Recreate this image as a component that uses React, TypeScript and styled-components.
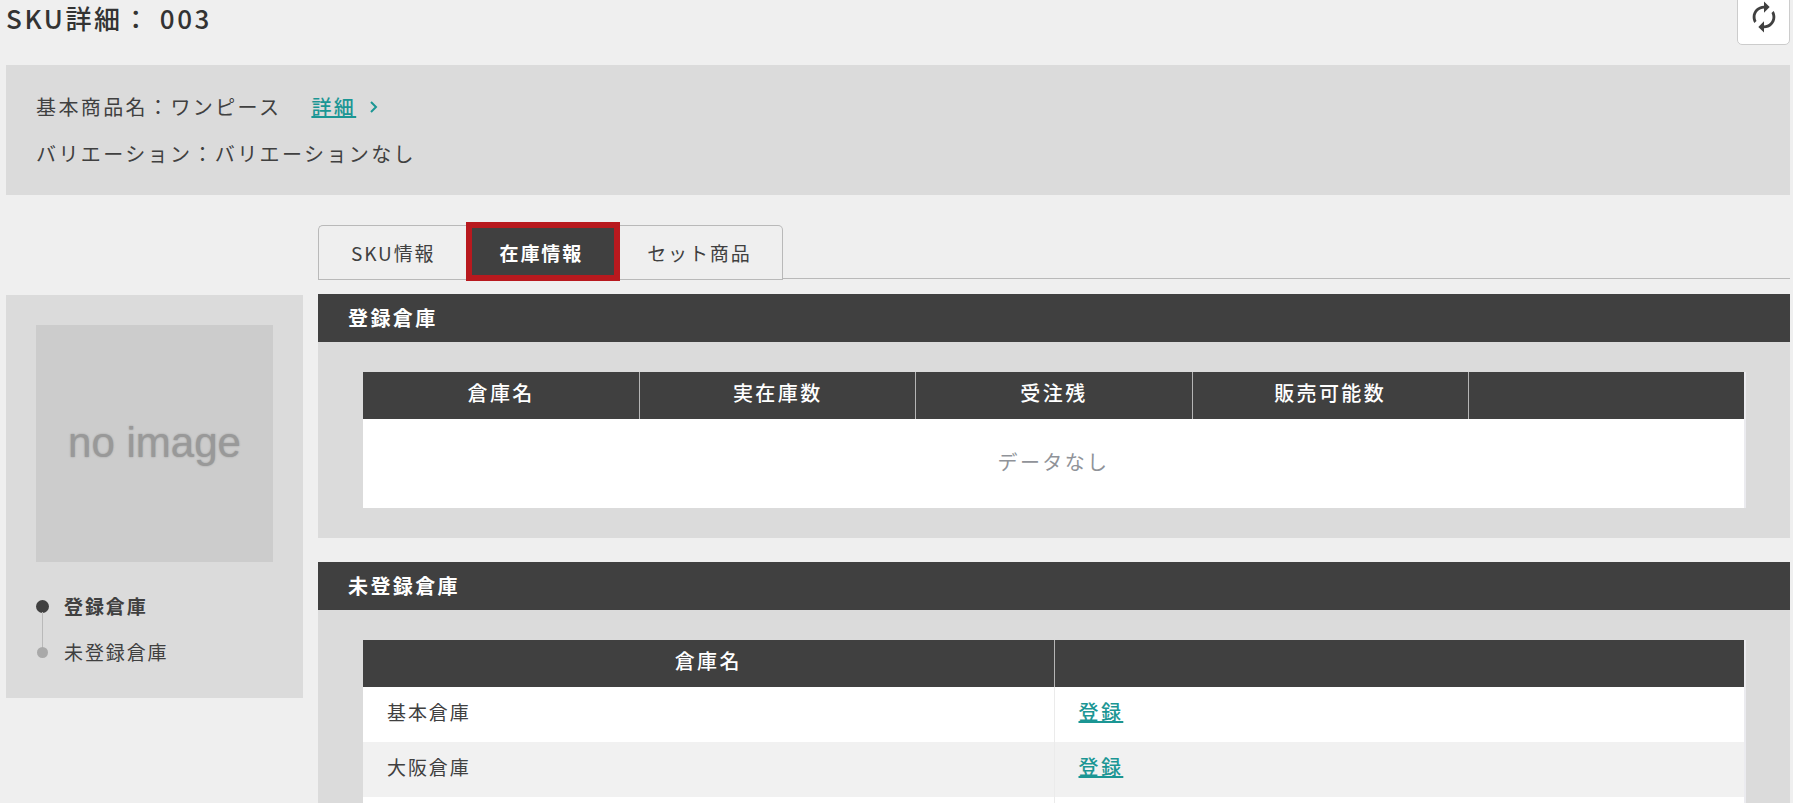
import React from 'react';
import styled, { createGlobalStyle, css } from 'styled-components';
import { MdAutorenew } from 'react-icons/md';

const color = {
  page: '#efefef',
  panel: '#dbdbdb',
  dark: '#404040',
  text: '#404040',
  heading: '#333333',
  link: '#1b9694',
  border: '#b9b9b9',
  marker: '#b8191e',
};

const GlobalStyle = createGlobalStyle`
  *, *::before, *::after { box-sizing: border-box; }
  html { scrollbar-width: none; }
  body {
    margin: 0;
    background: ${color.page};
    color: ${color.text};
    font-family: "Noto Sans CJK JP", "Noto Sans", sans-serif;
    font-size: 20px;
    line-height: 24px;
    letter-spacing: 0.12em;
  }
`;

const Page = styled.div`
  padding: 0 3px 0 6px;
`;

const Header = styled.header`
  display: flex;
  justify-content: space-between;
  align-items: flex-start;
  height: 65px;
`;

const Title = styled.h1`
  margin: 0;
  font-size: 26px;
  line-height: 36px;
  font-weight: 500;
  letter-spacing: 0.1em;
  color: ${color.heading};
`;

const RefreshButton = styled.button`
  display: flex;
  align-items: center;
  justify-content: center;
  width: 53px;
  height: 53px;
  margin-top: -8px;
  padding: 0 0 4px;
  border: 1px solid #cccccc;
  border-radius: 5px;
  background: #ffffff;
  color: ${color.text};
  font-size: 34px;
`;

const Summary = styled.dl`
  display: flex;
  flex-direction: column;
  gap: 23px;
  margin: 0;
  padding: 30px 30px 29px;
  background: ${color.panel};
`;

const SummaryRow = styled.div`
  display: flex;
  align-items: center;

  dt, dd { margin: 0; }
`;

const TextLink = styled.a`
  color: ${color.link};
  font-weight: 500;
  text-decoration: underline;
`;

const DetailLink = styled.span`
  display: inline-flex;
  align-items: center;
  gap: 13px;
  margin-left: 30px;
  color: ${color.link};
`;

const Columns = styled.div`
  display: grid;
  grid-template-columns: 297px minmax(0, 1fr);
  column-gap: 15px;
  align-items: start;
  margin-top: 30px;
`;

const Side = styled.aside`
  margin-top: 70px;
  padding: 30px;
  background: ${color.panel};
`;

const NoImage = styled.div`
  display: flex;
  align-items: center;
  justify-content: center;
  aspect-ratio: 1;
  padding-bottom: 2px;
  background: #cccccc;
  color: #999999;
  font-family: "Liberation Sans", Arial, sans-serif;
  font-size: 42px;
  line-height: 48px;
  letter-spacing: normal;
  text-shadow: 0 0 2px #999999;
`;

const Steps = styled.ol`
  display: flex;
  flex-direction: column;
  gap: 22px;
  margin: 32px 0 0;
  padding: 0 0 4px;
  list-style: none;
`;

const Step = styled.li<{ $current?: boolean }>`
  position: relative;
  display: flex;
  align-items: center;
  gap: 15px;
  font-size: 19px;
  letter-spacing: 0.1em;
  font-weight: ${(p) => (p.$current ? 700 : 400)};

  &:not(:last-child)::after {
    content: "";
    position: absolute;
    left: 6px;
    top: 18px;
    width: 1px;
    height: 36px;
    background: ${color.border};
  }
`;

const Dot = styled.span<{ $current?: boolean }>`
  display: flex;
  justify-content: center;
  width: 13px;

  &::before {
    content: "";
    width: ${(p) => (p.$current ? 13 : 11)}px;
    height: ${(p) => (p.$current ? 13 : 11)}px;
    border-radius: 50%;
    background: ${(p) => (p.$current ? color.dark : '#a9a9a9')};
  }
`;

const Tabs = styled.div`
  display: flex;
  align-items: flex-end;
  height: 55px;
  margin-bottom: 14px;

  &::after {
    content: "";
    flex: 1;
    height: 2px;
    border-top: 1px solid ${color.border};
  }
`;

const Tab = styled.button<{ $active?: boolean }>`
  position: relative;
  height: 55px;
  padding: 0 31px;
  border: 1px solid ${color.border};
  border-width: 1px 0;
  background: transparent;
  color: ${color.text};
  font: inherit;
  font-size: 19px;
  letter-spacing: 0.1em;

  &:first-child { padding-left: 32px; border-left-width: 1px; border-top-left-radius: 5px; }
  &:last-child { padding-right: 30px; border-right-width: 1px; border-top-right-radius: 5px; }

  ${(p) =>
    p.$active &&
    css`
      z-index: 1;
      padding: 0 33px;
      background: ${color.dark};
      color: #ffffff;
      font-weight: 700;

      &::after {
        content: "";
        position: absolute;
        inset: -4px -4px -2px -1px;
        border: 6px solid ${color.marker};
      }
    `}
`;

const Section = styled.section`
  margin-bottom: 24px;
  background: ${color.panel};
`;

const SectionTitle = styled.h2`
  margin: 0;
  padding: 0 30px;
  background: ${color.dark};
  color: #ffffff;
  font-size: 20px;
  line-height: 48px;
  font-weight: 700;
`;

const SectionBody = styled.div`
  padding: 30px 46px 30px 45px;
`;

const Table = styled.table`
  width: 100%;
  table-layout: fixed;
  border-collapse: separate;
  border-spacing: 0;
  background: #ffffff;
  box-shadow: 2px 0 0 #ebebef;
`;

const HeadCell = styled.th`
  height: 47px;
  padding: 0 0 6px;
  background: ${color.dark};
  color: #ffffff;
  font-weight: 500;
  text-align: center;

  & + & { border-left: 1px solid #b5b5b5; }
`;

const Row = styled.tr`
  &:nth-child(even) { background: #f1f1f1; }
`;

const Cell = styled.td`
  height: 55px;
  padding: 0 24px 6px;
  font-size: 19px;
  letter-spacing: 0.1em;

  & + & {
    border-left: 1px solid #ebebeb;
    font-size: 20px;
    letter-spacing: 0.12em;
  }
`;

const EmptyCell = styled.td`
  height: 89px;
  padding: 0 0 4px;
  color: #909399;
  text-align: center;
`;

const stockColumns = ['倉庫名', '実在庫数', '受注残', '販売可能数', ''];
const unregistered = ['基本倉庫', '大阪倉庫'];

function Chevron() {
  return (
    <svg width="10" height="14" viewBox="0 0 10 14" fill="none" stroke="currentColor" strokeWidth="2" aria-hidden="true">
      <path d="M2 2l5 5-5 5" />
    </svg>
  );
}

export default function App() {
  return (
    <Page>
      <GlobalStyle />
      <Header>
        <Title>SKU詳細： 003</Title>
        <RefreshButton type="button" aria-label="更新">
          <MdAutorenew />
        </RefreshButton>
      </Header>

      <Summary>
        <SummaryRow>
          <dt>基本商品名：</dt>
          <dd>
            ワンピース
            <DetailLink>
              <TextLink href="#product">詳細</TextLink>
              <Chevron />
            </DetailLink>
          </dd>
        </SummaryRow>
        <SummaryRow>
          <dt>バリエーション：</dt>
          <dd>バリエーションなし</dd>
        </SummaryRow>
      </Summary>

      <Columns>
        <Side>
          <NoImage>no image</NoImage>
          <Steps>
            <Step $current>
              <Dot $current />
              登録倉庫
            </Step>
            <Step>
              <Dot />
              未登録倉庫
            </Step>
          </Steps>
        </Side>

        <main>
          <Tabs role="tablist">
            <Tab type="button" role="tab" aria-selected={false}>SKU情報</Tab>
            <Tab type="button" role="tab" aria-selected $active>在庫情報</Tab>
            <Tab type="button" role="tab" aria-selected={false}>セット商品</Tab>
          </Tabs>

          <Section>
            <SectionTitle>登録倉庫</SectionTitle>
            <SectionBody>
              <Table>
                <thead>
                  <tr>
                    {stockColumns.map((name, i) => (
                      <HeadCell key={i} scope="col">{name}</HeadCell>
                    ))}
                  </tr>
                </thead>
                <tbody>
                  <tr>
                    <EmptyCell colSpan={5}>データなし</EmptyCell>
                  </tr>
                </tbody>
              </Table>
            </SectionBody>
          </Section>

          <Section>
            <SectionTitle>未登録倉庫</SectionTitle>
            <SectionBody>
              <Table>
                <thead>
                  <tr>
                    <HeadCell scope="col">倉庫名</HeadCell>
                    <HeadCell scope="col" />
                  </tr>
                </thead>
                <tbody>
                  {unregistered.map((name) => (
                    <Row key={name}>
                      <Cell>{name}</Cell>
                      <Cell>
                        <TextLink href="#register">登録</TextLink>
                      </Cell>
                    </Row>
                  ))}
                  <Row>
                    <Cell />
                    <Cell />
                  </Row>
                </tbody>
              </Table>
            </SectionBody>
          </Section>
        </main>
      </Columns>
    </Page>
  );
}
